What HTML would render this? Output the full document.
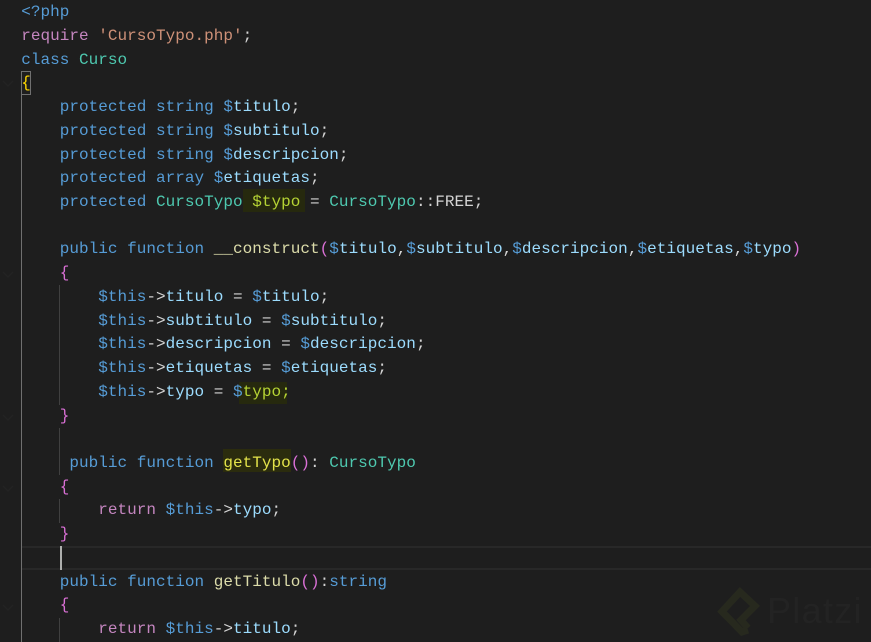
<!DOCTYPE html>
<html>
<head>
<meta charset="utf-8">
<style>
html,body{margin:0;padding:0;background:#1e1e1e;}
#e{position:relative;width:871px;height:642px;overflow:hidden;background:#1e1e1e;}
.l{position:absolute;left:21.2px;height:24px;line-height:24px;white-space:pre;font-family:"Liberation Mono",monospace;font-size:16px;letter-spacing:.025px;color:#d4d4d4;}
.b{position:absolute;}
.k{color:#569cd6}.v{color:#9cdcfe}.c{color:#4ec9b0}.f{color:#dcdcaa}.s{color:#ce9178}.m{color:#c586c0}.y{color:#ffd700}.p{color:#da70d6}.o{color:#d4d4d4}.h{color:#b5d334}.g{color:#e3e34a}
</style>
</head>
<body>
<div id="e">
<div class="b" style="left:22px;top:546px;width:849px;height:2px;background:#282828"></div>
<div class="b" style="left:22px;top:568px;width:849px;height:2px;background:#282828"></div>
<div class="b" style="left:21px;top:94px;width:1px;height:548px;background:#707070"></div>
<div class="b" style="left:59px;top:285px;width:1px;height:120px;background:#404040"></div>
<div class="b" style="left:59px;top:428px;width:1px;height:47px;background:#404040"></div>
<div class="b" style="left:59px;top:499px;width:1px;height:24px;background:#404040"></div>
<div class="b" style="left:59px;top:618px;width:1px;height:24px;background:#404040"></div>
<div class="b" style="left:21px;top:71px;width:8px;height:22px;border:1px solid #707070"></div>
<div class="b" style="left:243px;top:189px;width:62px;height:23px;background:#26290e"></div>
<div class="b" style="left:239px;top:382px;width:48px;height:22px;background:#26290e"></div>
<div class="b" style="left:223px;top:449px;width:68px;height:23px;background:#2b2c0e"></div>
<div class="b" style="left:60px;top:546px;width:2px;height:24px;background:#aeafad"></div>

<svg class="b" style="left:0;top:0" width="871" height="642" viewBox="0 0 871 642">
<g fill="none" stroke="#232323" stroke-width="1.5">
<path d="M3 81l5 5 5-5M3 272l5 5 5-5M3 415l5 5 5-5M3 486l5 5 5-5M3 605l5 5 5-5"/>
</g>
<path d="M748 630L742 632 722 611.500 740 592 755 606 741 620 748 628" fill="none" stroke="#27291e" stroke-width="7"/>
<text x="767" y="623" font-family="Liberation Sans,sans-serif" font-size="36" letter-spacing="1.300" fill="#232323">Platzi</text>
</svg>

<div class="l k" style="top:.1px">&lt;?php</div>
<div class="l" style="top:23.8px"><span class="m">require</span> <span class="s">'CursoTypo.php'</span>;</div>
<div class="l" style="top:47.6px"><span class="k">class</span> <span class="c">Curso</span></div>
<div class="l y" style="top:71.3px">{</div>
<div class="l" style="top:95px">    <span class="k">protected string $</span><span class="v">titulo</span>;</div>
<div class="l" style="top:118.8px">    <span class="k">protected string $</span><span class="v">subtitulo</span>;</div>
<div class="l" style="top:142.5px">    <span class="k">protected string $</span><span class="v">descripcion</span>;</div>
<div class="l" style="top:166.2px">    <span class="k">protected array $</span><span class="v">etiquetas</span>;</div>
<div class="l" style="top:190px">    <span class="k">protected</span> <span class="c">CursoTypo</span> <span class="h">$typo</span> = <span class="c">CursoTypo</span>::FREE;</div>
<div class="l" style="top:237.4px">    <span class="k">public function</span> <span class="f">__construct</span><span class="p">(</span><span class="k">$</span><span class="v">titulo</span>,<span class="k">$</span><span class="v">subtitulo</span>,<span class="k">$</span><span class="v">descripcion</span>,<span class="k">$</span><span class="v">etiquetas</span>,<span class="k">$</span><span class="v">typo</span><span class="p">)</span></div>
<div class="l p" style="top:261.1px">    {</div>
<div class="l" style="top:284.9px">        <span class="k">$this</span>-&gt;<span class="v">titulo</span> = <span class="k">$</span><span class="v">titulo</span>;</div>
<div class="l" style="top:308.6px">        <span class="k">$this</span>-&gt;<span class="v">subtitulo</span> = <span class="k">$</span><span class="v">subtitulo</span>;</div>
<div class="l" style="top:332.3px">        <span class="k">$this</span>-&gt;<span class="v">descripcion</span> = <span class="k">$</span><span class="v">descripcion</span>;</div>
<div class="l" style="top:356.1px">        <span class="k">$this</span>-&gt;<span class="v">etiquetas</span> = <span class="k">$</span><span class="v">etiquetas</span>;</div>
<div class="l" style="top:379.8px">        <span class="k">$this</span>-&gt;<span class="v">typo</span> = <span class="k">$</span><span class="h">typo;</span></div>
<div class="l p" style="top:403.5px">    }</div>
<div class="l" style="top:451px">     <span class="k">public function</span> <span class="g">getTypo</span><span class="p">()</span>: <span class="c">CursoTypo</span></div>
<div class="l p" style="top:474.7px">    {</div>
<div class="l" style="top:498.4px">        <span class="m">return</span> <span class="k">$this</span>-&gt;<span class="v">typo</span>;</div>
<div class="l p" style="top:522.2px">    }</div>
<div class="l" style="top:569.6px">    <span class="k">public function</span> <span class="f">getTitulo</span><span class="p">()</span>:<span class="k">string</span></div>
<div class="l p" style="top:593.4px">    {</div>
<div class="l" style="top:617.1px">        <span class="m">return</span> <span class="k">$this</span>-&gt;<span class="v">titulo</span>;</div>
</div>
</body>
</html>
